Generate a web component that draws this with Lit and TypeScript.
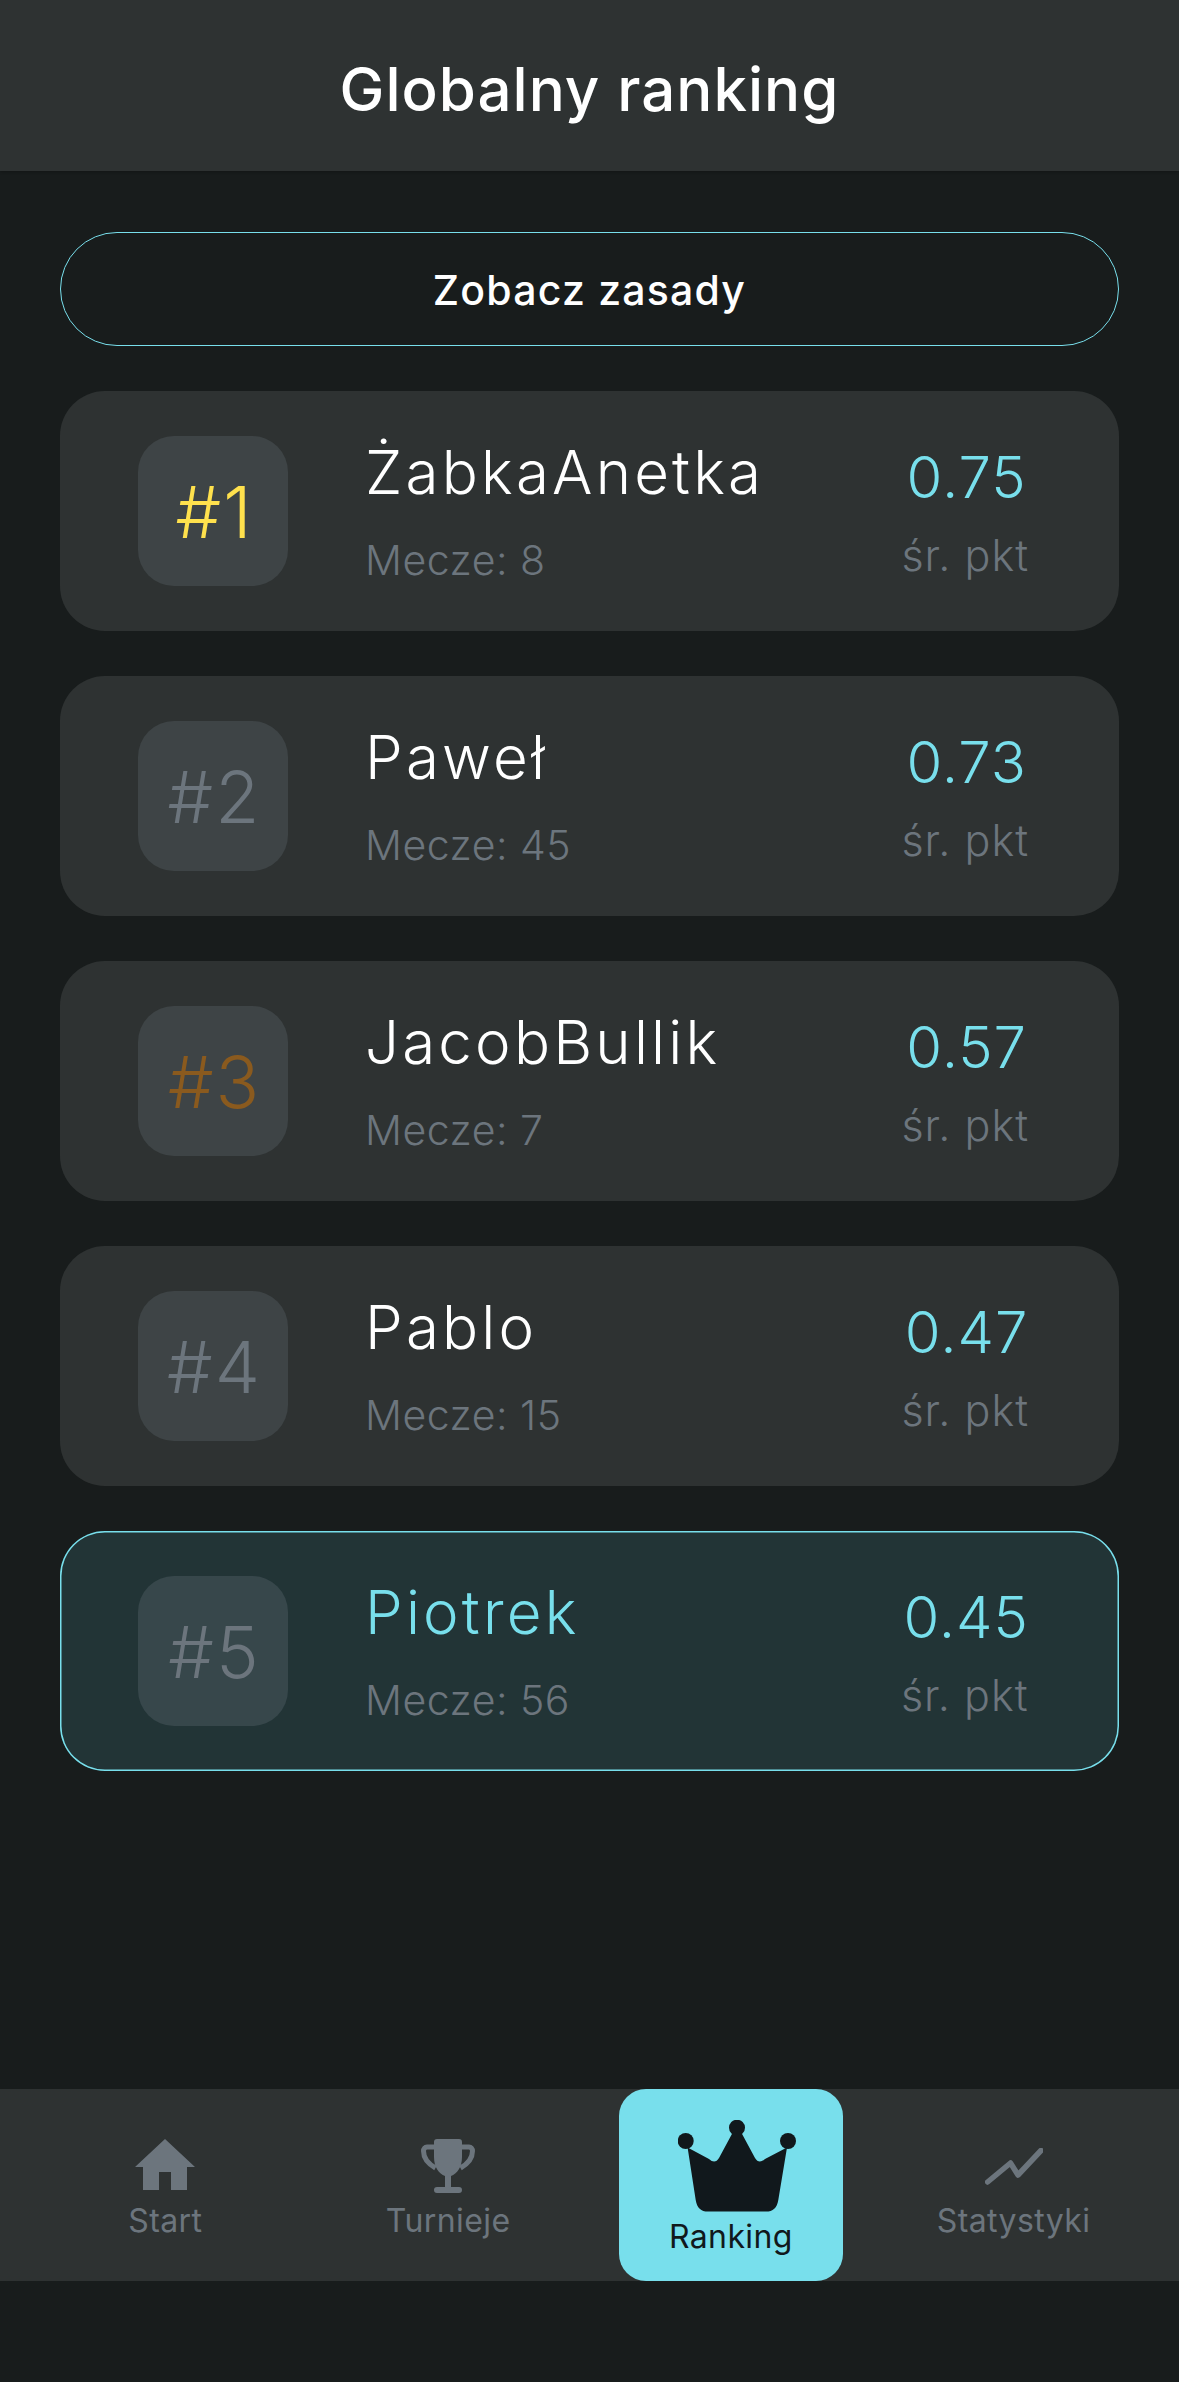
import { LitElement, html, css, svg } from "lit";
import { customElement } from "lit/decorators.js";
import { classMap } from "lit/directives/class-map.js";

const players = [
  { rank: 1, name: "ŻabkaAnetka", matches: 8, score: "0.75", medal: "gold" },
  { rank: 2, name: "Paweł", matches: 45, score: "0.73", medal: "" },
  { rank: 3, name: "JacobBullik", matches: 7, score: "0.57", medal: "bronze" },
  { rank: 4, name: "Pablo", matches: 15, score: "0.47", medal: "" },
  { rank: 5, name: "Piotrek", matches: 56, score: "0.45", medal: "", me: true },
];

const homeIcon = svg`<path d="M30 0 60 28H52V51H36V33H24V51H8V28H0Z" />`;
const trophyIcon = svg`
  <path d="M13 3a3 3 0 0 1 3-3h22a3 3 0 0 1 3 3v15c0 10-5 17-11 19v11h8a3 3 0 0 1 0 6H16a3 3 0 0 1 0-6h8V37c-6-2-11-9-11-19Z" />
  <path d="M14 8H6C4 8 2.500 9.500 2.500 12c0 8 5 13 12 17M40 8h8c2 0 3.500 1.500 3.500 4 0 8-5 13-12 17" fill="none" stroke="currentColor" stroke-width="5" />
`;
const crownIcon = svg`
  <circle cx="7.700" cy="21" r="8" /><circle cx="59" cy="7.700" r="8" /><circle cx="110" cy="21" r="8" />
  <path d="M9.600 27.600 31 39Q37 44.500 41 38L55 12H63L77 38Q81 44.500 87 39L109 27.600 100.300 80C99 88 95 91.600 88 91.600H30C23 91.600 19 88 17.700 80Z" />
`;
const chartIcon = svg`<path d="M2.600 34 25.500 15 33 27 56 2.500" fill="none" stroke="currentColor" stroke-width="5.500" stroke-linecap="round" stroke-linejoin="round" />`;

// gap = space between icon and label, shift = sideways offset of the icon
const tabs = [
  { label: "Start", icon: homeIcon, box: "0 0 60 51", w: 60, h: 51, gap: 12, shift: 0 },
  { label: "Turnieje", icon: trophyIcon, box: "0 0 54 54", w: 54, h: 54, gap: 9, shift: 0 },
  { label: "Ranking", icon: crownIcon, box: "0 0 118 92", w: 118, h: 92, gap: 6, shift: 13, active: true },
  { label: "Statystyki", icon: chartIcon, box: "0 0 58 37", w: 58, h: 37, gap: 17, shift: 0 },
];

@customElement("app-root")
export class AppRoot extends LitElement {
  static styles = css`
    :host {
      display: block;
      width: 1179px;
      height: 2382px;
      background: #181c1c;
      color: #fff;
      font-family: Inter, "Liberation Sans", sans-serif;
      overflow: hidden;
    }
    .page {
      display: flex;
      flex-direction: column;
      height: 100%;
    }
    .header {
      height: 171px;
      flex: none;
      box-sizing: border-box;
      padding-top: 6px;
      display: flex;
      align-items: center;
      justify-content: center;
      background: #2e3232;
      box-shadow: 0 1px 3px rgba(0, 0, 0, 0.25);
    }
    .header h1 {
      margin: 0;
      font-size: 60px;
      font-weight: 450;
      letter-spacing: 1px;
      line-height: 1;
    }
    .content {
      flex: 1;
      display: flex;
      flex-direction: column;
      gap: 45px;
      padding: 61px 60px 0;
    }
    .rules {
      height: 114px;
      box-sizing: border-box;
      padding-top: 2px;
      border: 1.5px solid #78dfec;
      border-radius: 57px;
      display: flex;
      align-items: center;
      justify-content: center;
      font-size: 41px;
      font-weight: 450;
      letter-spacing: 1.2px;
    }
    .card {
      height: 240px;
      box-sizing: border-box;
      display: flex;
      align-items: center;
      padding: 0 90px 0 78px;
      background: #2e3232;
      border-radius: 45px;
    }
    .card.me {
      background: #223436;
      box-shadow: inset 0 0 0 1.5px #78dfec;
    }
    .badge {
      width: 150px;
      height: 150px;
      flex: none;
      box-sizing: border-box;
      padding-left: 3px;
      display: flex;
      align-items: center;
      justify-content: center;
      border-radius: 36px;
      background: #3e4446;
      color: #6c757d;
      font-size: 72px;
      font-weight: 300;
      letter-spacing: 2px;
    }
    .me .badge {
      background: #37474b;
    }
    .gold {
      color: #ffe14d;
    }
    .bronze {
      color: #8a5a1e;
    }
    .info {
      flex: 1;
      margin-left: 77px;
      display: flex;
      flex-direction: column;
      gap: 28px;
    }
    .name {
      font-size: 60px;
      font-weight: 300;
      line-height: 70px;
      letter-spacing: 3.2px;
    }
    .me .name {
      color: #78dfec;
    }
    .matches {
      font-size: 41px;
      font-weight: 300;
      line-height: 50px;
      letter-spacing: 0.5px;
      color: #6c757d;
    }
    .result {
      display: flex;
      flex-direction: column;
      align-items: center;
      gap: 18px;
    }
    .score {
      margin-left: 3px;
      font-size: 58px;
      font-weight: 300;
      line-height: 70px;
      letter-spacing: 1px;
      color: #78dfec;
    }
    .avg {
      font-size: 43px;
      font-weight: 300;
      line-height: 50px;
      letter-spacing: 1px;
      color: #6c757d;
    }
    .nav {
      flex: none;
      height: 192px;
      margin-bottom: 101px;
      box-sizing: border-box;
      padding: 0 24px;
      display: flex;
      background: #2e3232;
    }
    .tab {
      flex: 1;
      display: flex;
      align-items: center;
      justify-content: center;
    }
    .tab-inner {
      height: 100%;
      display: flex;
      flex-direction: column;
      align-items: center;
      justify-content: flex-end;
      box-sizing: border-box;
      padding-bottom: 41px;
      color: #6c757d;
      font-size: 32px;
      line-height: 38px;
      letter-spacing: 0.4px;
    }
    .tab svg {
      display: block;
      fill: currentColor;
    }
    .tab-inner.active {
      width: 224px;
      padding-bottom: 25px;
      background: #78dfec;
      border-radius: 27px;
      color: #11181c;
    }
  `;

  render() {
    return html`
      <div class="page">
        <div class="header"><h1>Globalny ranking</h1></div>
        <div class="content">
          <div class="rules">Zobacz zasady</div>
          ${players.map(
            (p) => html`
              <div class=${classMap({ card: true, me: !!p.me })}>
                <div class="badge ${p.medal}">#${p.rank}</div>
                <div class="info">
                  <div class="name">${p.name}</div>
                  <div class="matches">Mecze: ${p.matches}</div>
                </div>
                <div class="result">
                  <div class="score">${p.score}</div>
                  <div class="avg">śr. pkt</div>
                </div>
              </div>
            `
          )}
        </div>
        <div class="nav">
          ${tabs.map(
            (t) => html`
              <div class="tab">
                <div class=${classMap({ "tab-inner": true, active: !!t.active })}>
                  <svg
                    width=${t.w}
                    height=${t.h}
                    viewBox=${t.box}
                    style="margin-bottom:${t.gap}px;margin-left:${t.shift}px"
                  >
                    ${t.icon}
                  </svg>
                  <span>${t.label}</span>
                </div>
              </div>
            `
          )}
        </div>
      </div>
    `;
  }
}
